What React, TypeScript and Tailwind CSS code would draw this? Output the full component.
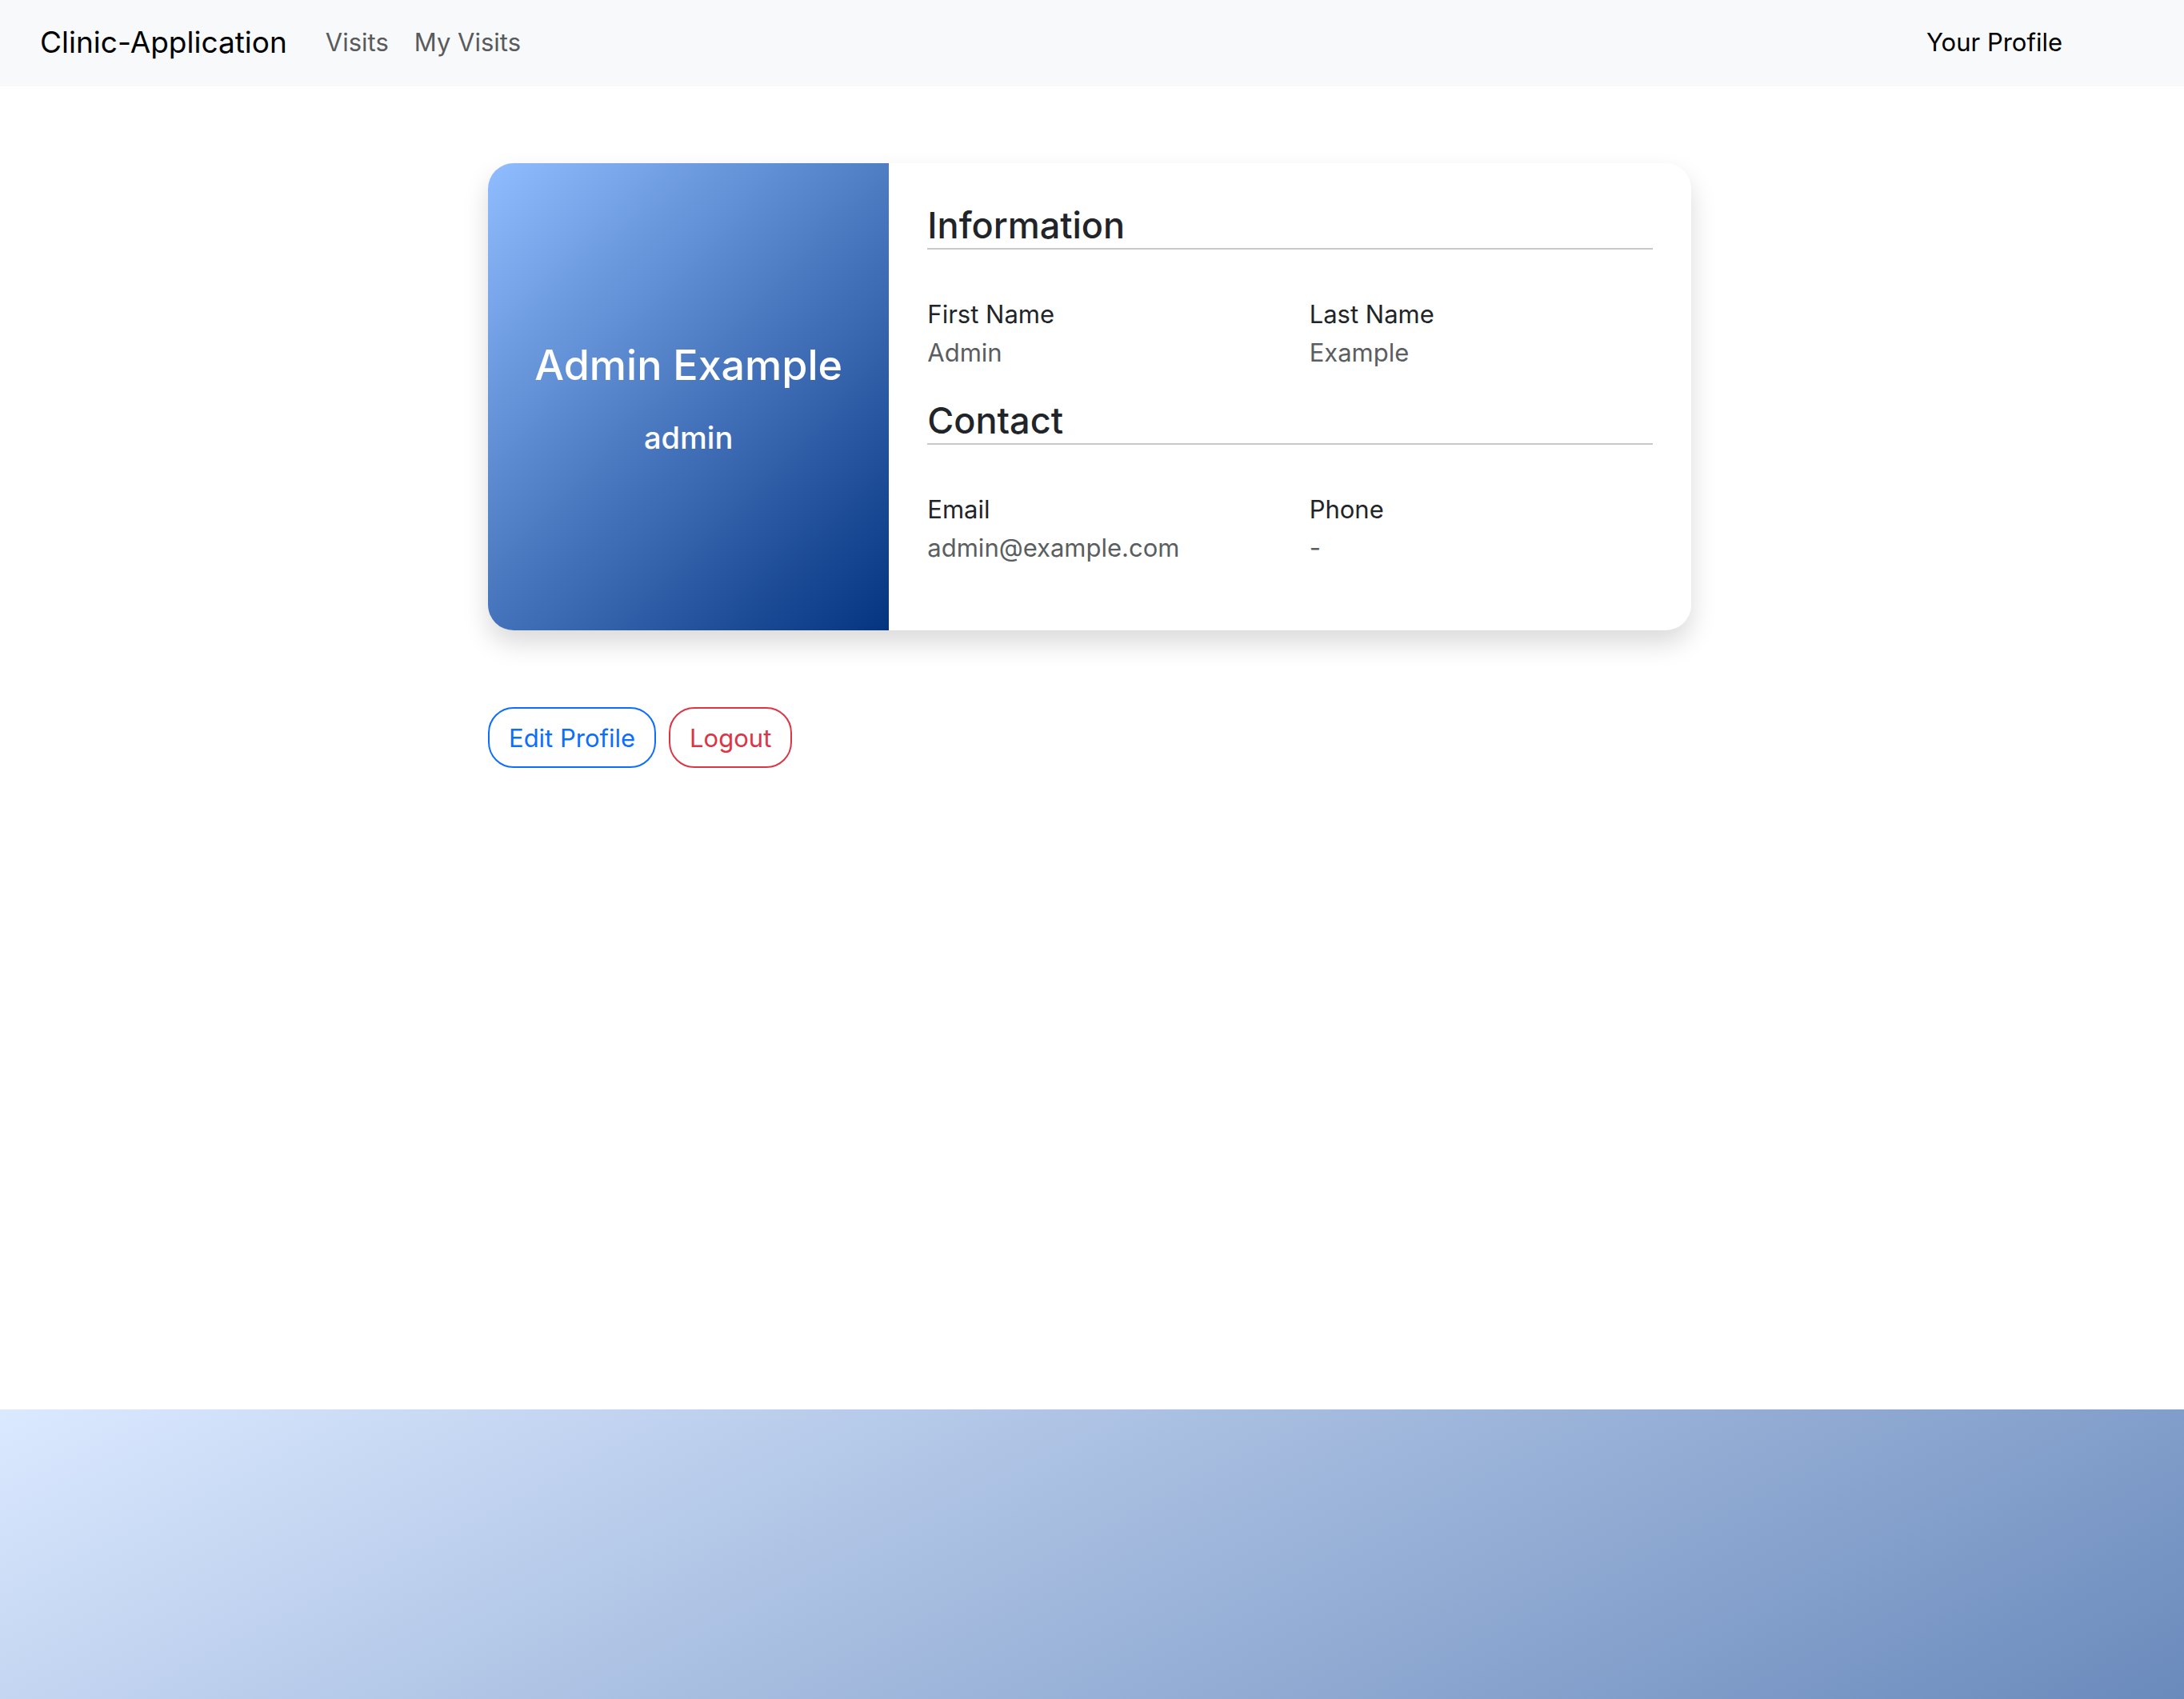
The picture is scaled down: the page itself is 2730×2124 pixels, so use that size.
type Field = { label: string; value: string };

function Section({ title, fields }: { title: string; fields: Field[] }) {
  return (
    <section className="mb-[31px]">
      <h2 className="pt-0.5 text-[45px] leading-[56px] font-medium">{title}</h2>
      <hr className="mb-[57px] border-0 h-[2px] bg-[#c7c8c9]" />
      <dl className="grid grid-cols-2 gap-12">
        {fields.map((f) => (
          <div key={f.label}>
            <dt>{f.label}</dt>
            <dd className="text-[#5a5e61]">{f.value}</dd>
          </div>
        ))}
      </dl>
    </section>
  );
}

export default function App() {
  return (
    <div className="flex min-h-screen flex-col bg-white font-['Inter',sans-serif] text-[31px] leading-[48px] text-[#212529]">
      <nav className="flex items-center bg-[#f8f9fb] pt-[23px] pr-[152px] pb-[25px] pl-[50px]">
        <a href="#" className="mr-12 text-[37px] leading-[60px] text-black">
          Clinic-Application
        </a>
        <div className="flex flex-1 gap-8 text-[#595a5b]">
          <a href="#visits">Visits</a>
          <a href="#my-visits">My Visits</a>
        </div>
        <a href="#profile" className="text-black">
          Your Profile
        </a>
      </nav>

      <main className="mx-auto w-full max-w-[1510px] flex-1 pt-24 pr-1.5">
        <div className="grid grid-cols-3 overflow-hidden rounded-[32px] bg-white shadow-[0_16px_32px_rgba(0,0,0,0.15)]">
          <div className="flex flex-col items-center justify-center gap-8 bg-[linear-gradient(135deg,#90bdff,#043380)] pt-0.5 text-white">
            <h1 className="text-[52px] leading-[68px] font-medium">Admin Example</h1>
            <p className="text-[38px] leading-[48px] font-medium">admin</p>
          </div>
          <div className="col-span-2 px-12 pt-12 pb-12">
            <Section
              title="Information"
              fields={[
                { label: "First Name", value: "Admin" },
                { label: "Last Name", value: "Example" },
              ]}
            />
            <Section
              title="Contact"
              fields={[
                { label: "Email", value: "admin@example.com" },
                { label: "Phone", value: "-" },
              ]}
            />
          </div>
        </div>

        <div className="mt-24 flex gap-4">
          <button type="button" className="rounded-[32px] border-2 border-[#0d6efd] px-6 pt-[13px] pb-[11px] text-[#0d6efd]">
            Edit Profile
          </button>
          <button type="button" className="rounded-[32px] border-2 border-[#dc3545] px-6 pt-[13px] pb-[11px] text-[#dc3545]">
            Logout
          </button>
        </div>
      </main>

      <footer className="h-[362px] bg-[linear-gradient(153deg,#dbe9ff,#6a8abc)]" />
    </div>
  );
}
